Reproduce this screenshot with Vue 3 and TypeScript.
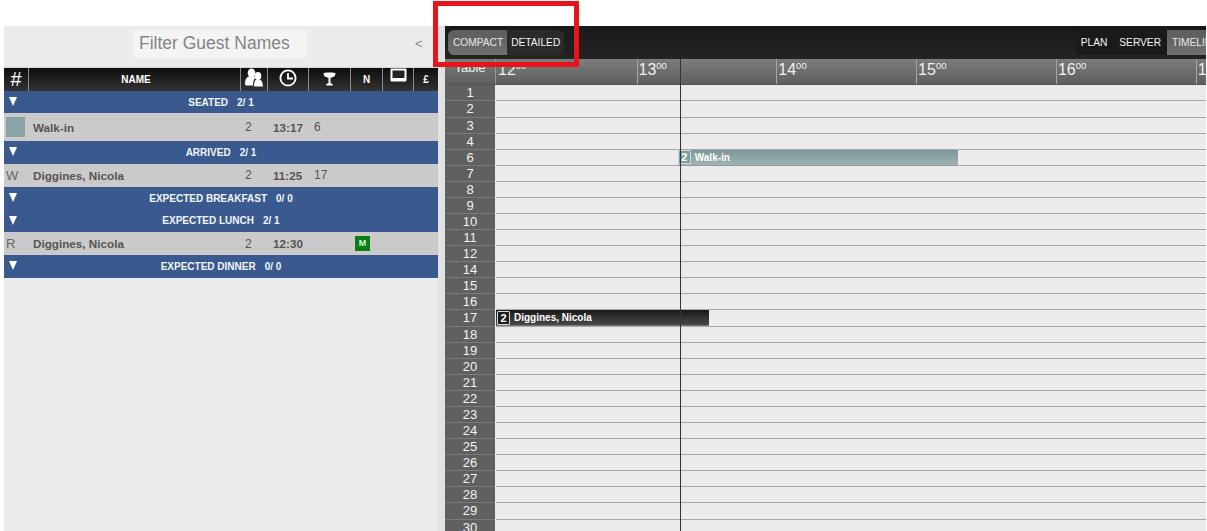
<script setup lang="ts">
interface Guest { mark: string; swatch?: boolean; name: string; covers: number; time: string; table?: number; note?: string }
interface Group { title: string; count: string; guests: Guest[] }
interface Booking { table: number; start: number; end: number; covers: number; name: string; kind: string }

const groups: Group[] = [
  { title: 'SEATED', count: '2/ 1', guests: [{ mark: '', swatch: true, name: 'Walk-in', covers: 2, time: '13:17', table: 6 }] },
  { title: 'ARRIVED', count: '2/ 1', guests: [{ mark: 'W', name: 'Diggines, Nicola', covers: 2, time: '11:25', table: 17 }] },
  { title: 'EXPECTED BREAKFAST', count: '0/ 0', guests: [] },
  { title: 'EXPECTED LUNCH', count: '2/ 1', guests: [{ mark: 'R', name: 'Diggines, Nicola', covers: 2, time: '12:30', note: 'M' }] },
  { title: 'EXPECTED DINNER', count: '0/ 0', guests: [] }
]

const hours = [12, 13, 14, 15, 16, 17]
const tables = [1, 2, 3, 4, 6, 7, 8, 9, 10, 11, 12, 14, 15, 16, 17, 18, 19, 20, 21, 22, 23, 24, 25, 26, 27, 28, 29, 30]
const pxPerMinute = 2.33
const bookings: Booking[] = [
  { table: 6, start: 78, end: 198.5, covers: 2, name: 'Walk-in', kind: 'walkin' },
  { table: 17, start: 0, end: 91.5, covers: 2, name: 'Diggines, Nicola', kind: 'dark' }
]
const bookingFor = (t: number) => bookings.find((b) => b.table === t)
const barStyle = (b: Booking) => ({ left: `${b.start * pxPerMinute}px`, width: `${(b.end - b.start) * pxPerMinute}px` })
const nowLeft = `${79 * pxPerMinute}px`
</script>

<template>
  <div class="page">
    <section class="guests">
      <div class="filter-bar">
        <div class="filter">Filter Guest Names</div>
        <span class="collapse">&lt;</span>
      </div>
      <div class="cols head">
        <div class="hash">#</div>
        <div class="hname">NAME</div>
        <div class="ico">
          <svg width="20" height="20" viewBox="0 0 20 20" fill="#fff"><ellipse cx="7.500" cy="5" rx="3.800" ry="4.500"/><path d="M1 16.500c0-5 1.500-7.500 4-8 1.500 1 3.500 1 5 0 .7.200 1.200.7 1.500 1.200C9.800 11 9 13.500 9 17.500H2z"/><ellipse cx="14" cy="8" rx="3.300" ry="3.900"/><path d="M10 18.500c0-4 .8-6.200 2.200-7 1.200.8 2.600.8 3.700 0 1.500.8 3 3 3 7z"/></svg>
        </div>
        <div class="ico">
          <svg width="18" height="18" viewBox="0 0 18 18" fill="none" stroke="#fff" stroke-width="1.800"><circle cx="9" cy="9" r="7.600"/><path d="M9 4V9.500H14"/></svg>
        </div>
        <div class="ico glass">
          <svg width="13" height="14" viewBox="0 0 13 14" fill="#fff"><path d="M.5 1.500C.5.800 3 .5 6.500.5s6 .3 6 1c0 2.500-2.300 4-5 4.300V11l2.300 1.200V13.500H3.200v-1.300L5.500 11V5.800C2.800 5.500.5 4 .5 1.500z"/></svg>
        </div>
        <div class="ico letter">N</div>
        <div class="ico top">
          <svg width="17" height="14" viewBox="0 0 17 14"><rect x="0.500" y="0.500" width="16" height="13" rx="1" fill="#fff"/><rect x="2.500" y="2.500" width="12" height="7.500" fill="#222"/></svg>
        </div>
        <div class="ico letter last">£</div>
      </div>
      <template v-for="(g, i) in groups" :key="g.title">
        <div class="group" :class="{ first: i === 0 }">
          <span class="tri"></span>
          <span class="gtitle">{{ g.title }}</span>
          <span class="gcount">{{ g.count }}</span>
        </div>
        <div v-for="p in g.guests" :key="p.name + p.time" class="cols guest" :class="{ tall: p.swatch }">
          <div class="mark"><span v-if="p.swatch" class="swatch"></span><template v-else>{{ p.mark }}</template></div>
          <div class="gname">{{ p.name }}</div>
          <div class="cov">{{ p.covers }}</div>
          <div class="time">{{ p.time }}</div>
          <div class="tbl">{{ p.table }}</div>
          <div class="note"><span v-if="p.note" class="badge">{{ p.note }}</span></div>
        </div>
      </template>
    </section>

    <section class="board">
      <div class="toolbar">
        <div class="seg">
          <span class="btn on">COMPACT</span>
          <span class="btn">DETAILED</span>
        </div>
        <div class="seg right">
          <span class="btn">PLAN</span>
          <span class="btn">SERVER</span>
          <span class="btn on timeline">TIMELINE</span>
        </div>
      </div>
      <div class="scale">
        <div class="corner">Table</div>
        <div v-for="h in hours" :key="h" class="hour">{{ h }}<sup>00</sup></div>
      </div>
      <div class="rows">
        <div v-for="t in tables" :key="t" class="row">
          <div class="tno">{{ t }}</div>
          <div class="track">
            <div v-if="bookingFor(t)" class="bar" :class="bookingFor(t)!.kind" :style="barStyle(bookingFor(t)!)">
              <span class="pax">{{ bookingFor(t)!.covers }}</span>
              <span class="bname">{{ bookingFor(t)!.name }}</span>
            </div>
          </div>
        </div>
      </div>
      <div class="now" :style="{ marginLeft: nowLeft }"></div>
    </section>

    <div class="highlight"></div>
  </div>
</template>

<style>
html, body { margin: 0; height: 531px; overflow: hidden; background: #fff; }
</style>

<style scoped>
.page {
  position: relative;
  display: flex;
  height: 505px;
  padding: 26px 1px 0 4px;
  overflow: hidden;
  font-family: "Liberation Sans", Arial, sans-serif;
  background: #fff;
}
.guests {
  width: 434px;
  flex: none;
  background: #ebebeb;
}
.filter-bar {
  position: relative;
  height: 41px;
  box-sizing: border-box;
  padding: 4px 0 0 129px;
}
.filter {
  width: 174px;
  height: 28px;
  box-sizing: border-box;
  padding-left: 6px;
  border-radius: 3px;
  background: #f4f4f4;
  color: #848484;
  font-size: 17.500px;
  line-height: 27px;
}
.collapse {
  position: absolute;
  left: 411px;
  top: 10px;
  color: #888;
  font-size: 13px;
}
.cols {
  display: grid;
  grid-template-columns: 25px 212px 27px 41px 42px 32px 31px 24px;
}
.head {
  height: 24px;
  background: linear-gradient(#0e0e0e, #333);
  color: #fff;
  border-top: 1px solid #d8d8d8;
  box-sizing: border-box;
}
.head > div {
  display: flex;
  align-items: center;
  justify-content: center;
  border-right: 1px solid #8a8a8a;
  box-sizing: border-box;
}
.hash { font-size: 20px; }
.head .hname { font-size: 10px; font-weight: bold; padding-left: 3px; }
.head .top { align-items: flex-start; }
.head .ico svg { margin-top: -4px; }
.head .top svg { margin-top: 0; }
.head .glass svg { margin-top: -1px; }
.letter { font-size: 10px; font-weight: bold; }
.head .last { border-right: 0; }
.group {
  position: relative;
  height: 22.850px;
  display: flex;
  align-items: center;
  justify-content: center;
  gap: 9px;
  background: #3a5a8f;
  color: #f1f4f8;
  font-size: 10px;
  font-weight: bold;
}
.group.first { height: 22px; }
.tri {
  position: absolute;
  left: 5px;
  top: 6px;
  width: 0;
  height: 0;
  border-left: 4.500px solid transparent;
  border-right: 4.500px solid transparent;
  border-top: 9px solid #fff;
}
.guest {
  height: 22.850px;
  align-items: center;
  background: #cacaca;
  color: #555;
  font-size: 11.700px;
}
.guest.tall { height: 28px; }
.mark { padding-left: 2px; font-size: 13px; color: #666; display: flex; align-items: center; }
.swatch { width: 19px; height: 20px; background: #88a4a6; }
.gname { padding-left: 4px; font-weight: bold; }
.cov { padding-left: 4px; font-size: 12px; }
.time { padding-left: 5px; font-weight: bold; }
.tbl { padding-left: 5px; font-size: 12px; }
.guest .note { grid-column: 5 / span 2; grid-row: 1; padding-left: 46px; display: flex; align-items: center; }
.guest .tbl { grid-column: 5; grid-row: 1; }
.badge {
  display: block;
  width: 15px;
  height: 15px;
  background: #0a7d12;
  color: #d8f5d8;
  font-size: 9px;
  font-weight: bold;
  line-height: 15px;
  text-align: center;
}
.board {
  position: relative;
  flex: 1;
  min-width: 0;
  border-left: 7px solid #e2e2e2;
  overflow: hidden;
  background: #ebebeb;
}
.toolbar {
  height: 33px;
  display: flex;
  align-items: flex-start;
  justify-content: space-between;
  padding: 4px 0 0 3px;
  box-sizing: border-box;
  background: linear-gradient(#181818, #242424);
}
.seg {
  display: flex;
  height: 25px;
  border-radius: 6px;
  background: #2a2a2a;
  overflow: hidden;
}
.seg.right {
  margin-right: -18px;
  background: #1a1a1a;
  border-radius: 6px 0 0 6px;
  flex: none;
}
.btn {
  padding: 0 4px;
  color: #f2f2f2;
  font-size: 10.200px;
  line-height: 25px;
}
.btn.on { background: linear-gradient(#5d5d5d, #707070); color: #e8e8e8; padding-left: 5px; }
.right .btn { padding: 0 6px; }
.right .timeline { padding: 0 5px; }
.scale {
  display: flex;
  height: 26px;
  background: linear-gradient(#7c7c7c, #5f5f5f);
  color: #f0f0f0;
  border-bottom: 1px solid #555;
  box-sizing: border-box;
}
.corner {
  width: 51px;
  flex: none;
  text-align: center;
  font-size: 13px;
  line-height: 18px;
  box-sizing: border-box;
  border-right: 1px solid #999;
}
.hour {
  width: 139.800px;
  flex: none;
  box-sizing: border-box;
  padding-left: 1px;
  border-right: 1px solid #a5a5a5;
  font-size: 16px;
  line-height: 21px;
}
.corner + .hour { width: 141.500px; padding-left: 2px; }
.hour sup { font-size: 9.500px; line-height: 0; vertical-align: 6px; }
.rows { padding-top: 0.400px; }
.row {
  display: flex;
  height: 16.090px;
  box-sizing: border-box;
}
.tno {
  width: 50px;
  flex: none;
  margin-right: 1px;
  background: #606060;
  border-bottom: 1px solid #7b7b7b;
  box-sizing: border-box;
  color: #f2f2f2;
  font-size: 13px;
  line-height: 16px;
  text-align: center;
}
.track {
  position: relative;
  flex: 1;
  background: #ebebeb;
  border-bottom: 1px solid #a8a8a8;
  box-sizing: border-box;
}
.bar {
  position: absolute;
  top: 0;
  height: 16px;
  display: flex;
  align-items: center;
  box-sizing: border-box;
  padding-left: 1px;
  gap: 4px;
  color: #fff;
  font-size: 10px;
  font-weight: bold;
}
.bar.walkin { background: linear-gradient(#7a979a, #9fb4b4); padding-left: 0; border-bottom: 1px solid #999; }
.bar.dark { background: linear-gradient(#1a1a1a, #484848); border-bottom: 1px solid #777; }
.pax {
  width: 13px;
  height: 14px;
  border: 1px solid #d3d9d9;
  box-sizing: border-box;
  background: #1d1d1d;
  text-align: center;
  line-height: 12px;
  font-size: 11px;
  border-radius: 1px;
}
.walkin .pax { background: #7f9c9e; }
.now {
  position: absolute;
  left: 51px;
  top: 33px;
  bottom: 0;
  width: 1px;
  background: #333;
}
.highlight {
  position: absolute;
  left: 433px;
  top: 1px;
  width: 146px;
  height: 66px;
  box-sizing: border-box;
  border: 5px solid #e8141c;
  pointer-events: none;
}
</style>
